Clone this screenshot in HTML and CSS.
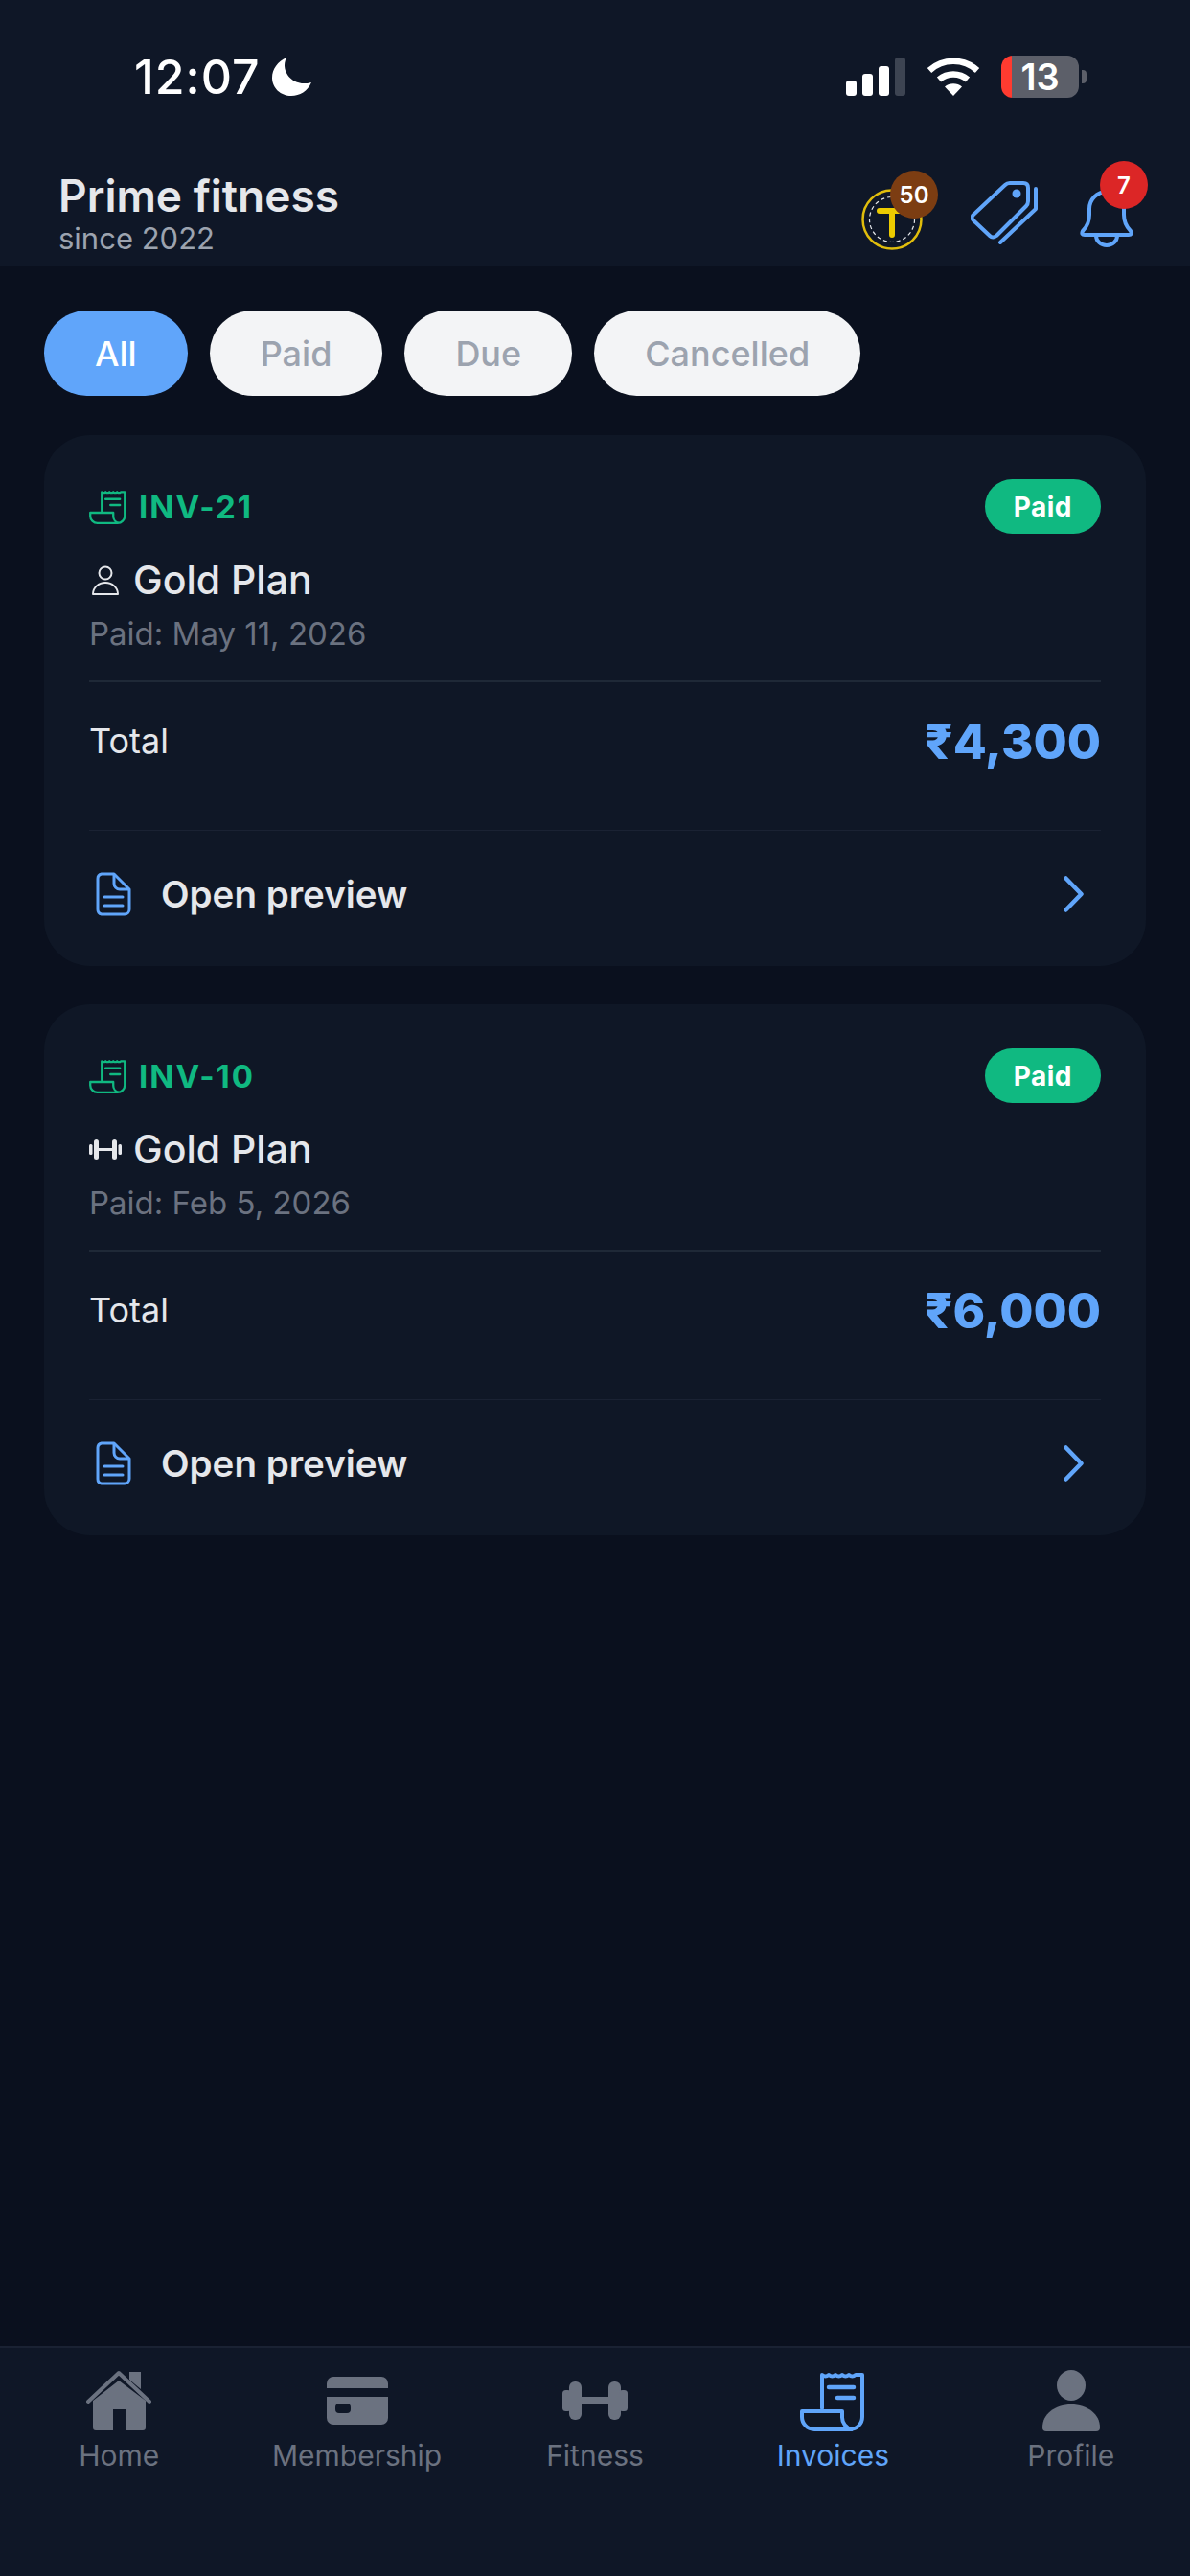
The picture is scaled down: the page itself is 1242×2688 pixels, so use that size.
FILE: index.html
```html
<!DOCTYPE html>
<html lang="en">
<head>
  <meta charset="UTF-8">
  <meta name="viewport" content="width=device-width, initial-scale=1.0">
  <title>Invoices</title>
  <link rel="stylesheet" href="styles.css">
</head>
<body>
  <svg class="sprite" xmlns="http://www.w3.org/2000/svg">
    <symbol id="receipt" viewBox="0 0 68 63">
      <path d="M23 39V4q3.5 3 7 0q3.5 3 7 0q3.5 3 7 0q3.5 3 7 0q3.5 3 7 0l7 0V48a13 13 0 0 1-13 13H15A13 13 0 0 1 2 48V42H44V48a13 13 0 0 0 10 13" fill="none" stroke="currentColor" stroke-width="4" stroke-linejoin="round" stroke-linecap="round"/>
      <path d="M30 17H56M39 28H56" fill="none" stroke="currentColor" stroke-width="4.5" stroke-linecap="round"/>
    </symbol>
    <symbol id="doc" viewBox="0 0 37 46">
      <path d="M6 2H19L35 18V39a5 5 0 0 1-5 5H6a5 5 0 0 1-4-5V7a5 5 0 0 1 4-5Z" fill="none" stroke="currentColor" stroke-width="3" stroke-linejoin="round"/>
      <path d="M19 3V12a6 6 0 0 0 6 6H34M9 26H28M9 35H28" fill="none" stroke="currentColor" stroke-width="3" stroke-linecap="round"/>
    </symbol>
    <symbol id="chevron" viewBox="0 0 21 38">
      <path d="M2.5 2.5 18.5 19 2.5 35.5" fill="none" stroke="currentColor" stroke-width="4.5" stroke-linecap="round" stroke-linejoin="round"/>
    </symbol>
    <symbol id="dumbbell" viewBox="0 0 68 40">
      <rect x="0" y="9" width="9" height="22" rx="3.5" fill="currentColor"/>
      <rect x="7" y="0" width="13" height="40" rx="6" fill="currentColor"/>
      <rect x="18" y="16" width="32" height="8" fill="currentColor"/>
      <rect x="48" y="0" width="13" height="40" rx="6" fill="currentColor"/>
      <rect x="59" y="9" width="9" height="22" rx="3.5" fill="currentColor"/>
    </symbol>
  </svg>

  <div class="app">
    <header class="topbar">
      <div class="status">
        <div class="status-left">
          <span class="clock">12:07</span>
          <svg class="moon" viewBox="0 0 41 40"><path d="M15 0C6 4 0 12 0 21C0 32 9 40 20 40C29 40 37 35 41 26C38 27 36 27 33 27C22 27 13 18 13 8C13 5 14 2 15 0Z" fill="#fff"/></svg>
        </div>
        <div class="status-right">
          <svg class="signal" viewBox="0 0 62 40">
            <rect x="0" y="24" width="11" height="16" rx="3" fill="#fff"/>
            <rect x="17" y="17" width="11" height="23" rx="3" fill="#fff"/>
            <rect x="34" y="9" width="11" height="31" rx="3" fill="#fff"/>
            <rect x="51" y="0" width="11" height="40" rx="3" fill="#3d4452"/>
          </svg>
          <svg class="wifi" viewBox="0 0 56 40">
            <path d="M3 13.5A37 37 0 0 1 53 13.5" fill="none" stroke="#fff" stroke-width="6.5"/>
            <path d="M13 23A23 23 0 0 1 43 23" fill="none" stroke="#fff" stroke-width="6.5"/>
            <path d="M19 30.5A14 14 0 0 1 37 30.5L28 40Z" fill="#fff"/>
          </svg>
          <div class="battery">13</div>
          <span class="battery-cap"></span>
        </div>
      </div>
      <div class="brandbar">
        <div class="brand">
          <div class="brand-name">Prime fitness</div>
          <div class="brand-since">since 2022</div>
        </div>
        <div class="actions">
          <div class="action action-coin">
            <svg class="coin" viewBox="0 0 64 64">
              <circle cx="32" cy="32" r="30.5" fill="none" stroke="#e0bd0c" stroke-width="2.5"/>
              <circle cx="32" cy="32" r="23.5" fill="none" stroke="#e5e7eb" stroke-width="1.2" stroke-dasharray="4 3"/>
              <path d="M19 23H45M32 23V48" fill="none" stroke="#eccb00" stroke-width="6" stroke-linecap="round"/>
            </svg>
            <span class="count count-brown">50</span>
          </div>
          <div class="action action-tag">
            <svg class="tag" viewBox="0 0 70 66">
              <path d="M3 35 36 4Q38 2 41 2H55Q60 2 60 7V21Q60 24 58 26L27 57Q23 60 20 57L3 41Q0 38 3 35Z" fill="none" stroke="#60a5fa" stroke-width="4" stroke-linejoin="round"/>
              <circle cx="48" cy="13" r="4.5" fill="#60a5fa"/>
              <path d="M68 8V29L31 64" fill="none" stroke="#60a5fa" stroke-width="4" stroke-linecap="round" stroke-linejoin="round"/>
            </svg>
          </div>
          <div class="action action-bell">
            <svg class="bell" viewBox="0 0 56 62">
              <path d="M5 49Q1 49 3 45Q10 38 10 28V22A18 18 0 0 1 46 22V28Q46 38 53 45Q55 49 51 49Z" fill="none" stroke="#60a5fa" stroke-width="4" stroke-linejoin="round"/>
              <path d="M17 50A11 10 0 0 0 39 50" fill="none" stroke="#60a5fa" stroke-width="4"/>
            </svg>
            <span class="count count-red">7</span>
          </div>
        </div>
      </div>
    </header>

    <main class="content">
      <div class="filters">
        <button class="pill pill-active">All</button>
        <button class="pill">Paid</button>
        <button class="pill">Due</button>
        <button class="pill">Cancelled</button>
      </div>

      <section class="card">
        <div class="card-head">
          <div class="inv">
            <svg class="inv-icon"><use href="#receipt"/></svg>
            <span>INV-21</span>
          </div>
          <span class="badge">Paid</span>
        </div>
        <div class="plan">
          <svg class="plan-icon person" viewBox="0 0 30 31">
            <ellipse cx="15" cy="8" rx="6.5" ry="6.5" fill="none" stroke="#e5e7eb" stroke-width="2"/>
            <path d="M2 30C2 23 8 18 15 18S28 23 28 30Z" fill="none" stroke="#e5e7eb" stroke-width="2" stroke-linejoin="round"/>
          </svg>
          <span>Gold Plan</span>
        </div>
        <div class="paid-date">Paid: May 11, 2026</div>
        <div class="total">
          <span class="total-label">Total</span>
          <span class="total-amount">₹4,300</span>
        </div>
        <div class="preview">
          <svg class="doc-icon"><use href="#doc"/></svg>
          <span class="preview-text">Open preview</span>
          <svg class="chevron-icon"><use href="#chevron"/></svg>
        </div>
      </section>

      <section class="card">
        <div class="card-head">
          <div class="inv">
            <svg class="inv-icon"><use href="#receipt"/></svg>
            <span>INV-10</span>
          </div>
          <span class="badge">Paid</span>
        </div>
        <div class="plan">
          <svg class="plan-icon barbell" viewBox="0 0 34 21">
            <rect x="0" y="5" width="3.5" height="11" rx="1.5" fill="#e5e7eb"/>
            <rect x="5" y="0" width="5" height="21" rx="2.5" fill="#e5e7eb"/>
            <rect x="9" y="9" width="16" height="3" fill="#e5e7eb"/>
            <rect x="24" y="0" width="5" height="21" rx="2.5" fill="#e5e7eb"/>
            <rect x="30.5" y="5" width="3.5" height="11" rx="1.5" fill="#e5e7eb"/>
          </svg>
          <span>Gold Plan</span>
        </div>
        <div class="paid-date">Paid: Feb 5, 2026</div>
        <div class="total">
          <span class="total-label">Total</span>
          <span class="total-amount">₹6,000</span>
        </div>
        <div class="preview">
          <svg class="doc-icon"><use href="#doc"/></svg>
          <span class="preview-text">Open preview</span>
          <svg class="chevron-icon"><use href="#chevron"/></svg>
        </div>
      </section>
    </main>

    <nav class="tabbar">
      <a class="tab">
        <span class="tab-icon">
          <svg class="home-icon" viewBox="0 0 68 64">
            <path d="M45 2H57V20L45 10Z" fill="currentColor"/>
            <path d="M2 33 34 3 66 33" fill="none" stroke="currentColor" stroke-width="4" stroke-linecap="round" stroke-linejoin="round"/>
            <path d="M7 32 34 11 62 32V60a3 3 0 0 1-3 3H42V41H28V63H10a3 3 0 0 1-3-3Z" fill="currentColor"/>
          </svg>
        </span>
        <span>Home</span>
      </a>
      <a class="tab">
        <span class="tab-icon">
          <svg class="card-icon" viewBox="0 0 64 50">
            <path d="M0 12V7a7 7 0 0 1 7-7H57a7 7 0 0 1 7 7V12Z" fill="currentColor"/>
            <path fill-rule="evenodd" d="M0 21H64V43a7 7 0 0 1-7 7H7a7 7 0 0 1-7-7ZM13 28a4 4 0 0 0-4 4V34a4 4 0 0 0 4 4H21a4 4 0 0 0 4-4V32a4 4 0 0 0-4-4Z" fill="currentColor"/>
          </svg>
        </span>
        <span>Membership</span>
      </a>
      <a class="tab">
        <span class="tab-icon">
          <svg class="dumbbell-icon"><use href="#dumbbell"/></svg>
        </span>
        <span>Fitness</span>
      </a>
      <a class="tab tab-active">
        <span class="tab-icon">
          <svg class="receipt-icon"><use href="#receipt"/></svg>
        </span>
        <span>Invoices</span>
      </a>
      <a class="tab">
        <span class="tab-icon">
          <svg class="profile-icon" viewBox="0 0 60 64">
            <ellipse cx="30" cy="16" rx="15" ry="16" fill="currentColor"/>
            <path d="M0 60C0 46 13 36 30 36S60 46 60 60Q60 64 56 64H4Q0 64 0 60Z" fill="currentColor"/>
          </svg>
        </span>
        <span>Profile</span>
      </a>
    </nav>
  </div>
</body>
</html>
```

FILE: styles.css
```css
* {
  box-sizing: border-box;
}
html, body {
  margin: 0;
  height: 100%;
}
body {
  font-family: Inter, "Noto Sans", sans-serif;
  font-optical-sizing: none;
  background-color: #0a101e;
  color: #e5e7eb;
}
.sprite {
  display: none;
}
.app {
  display: flex;
  flex-direction: column;
  height: 2688px;
}

/* top area */
.topbar {
  height: 278px;
  background: #0f1727;
}
.status {
  display: flex;
  justify-content: space-between;
  align-items: center;
  height: 160px;
  padding: 0 108px 0 140px;
}
.status-left {
  display: flex;
  align-items: center;
  gap: 12px;
}
.clock {
  font-size: 50px;
  font-weight: 500;
  letter-spacing: 1px;
  color: #fff;
}
.moon {
  width: 41px;
  height: 40px;
}
.status-right {
  display: flex;
  align-items: center;
}
.signal {
  width: 62px;
  height: 40px;
}
.wifi {
  width: 56px;
  height: 40px;
  margin-left: 22px;
}
.battery {
  width: 81px;
  height: 44px;
  margin-left: 22px;
  border-radius: 12px;
  background: linear-gradient(to right, #ff3b30 11px, #5c5f69 11px);
  color: #fff;
  font-size: 38px;
  font-weight: 600;
  line-height: 44px;
  text-align: center;
}
.battery-cap {
  width: 5px;
  height: 14px;
  margin-left: 3px;
  border-radius: 0 4px 4px 0;
  background: #5c5f69;
}
.brandbar {
  display: flex;
  justify-content: space-between;
  align-items: flex-start;
  padding: 18px 59px 0 61px;
}
.brand-name {
  padding-top: 1px;
  font-size: 46px;
  font-weight: 600;
  line-height: 50px;
}
.brand-since {
  font-size: 31px;
  line-height: 40px;
  color: #9ca3af;
}
.actions {
  display: flex;
  align-items: flex-start;
  padding-top: 11px;
}
.action {
  position: relative;
}
.action svg {
  display: block;
}
.coin {
  width: 64px;
  height: 64px;
  margin-top: 8px;
}
.tag {
  width: 70px;
  height: 66px;
}
.bell {
  width: 56px;
  height: 62px;
}
.action-tag {
  margin-left: 50px;
}
.action-bell {
  margin-left: 44px;
  padding-top: 7px;
}
.count {
  position: absolute;
  display: flex;
  align-items: center;
  justify-content: center;
  width: 50px;
  height: 50px;
  border-radius: 50%;
  color: #fff;
  font-size: 24px;
  font-weight: 600;
}
.count-brown {
  top: -11px;
  left: 30px;
  background: #7c3d12;
}
.count-red {
  top: -21px;
  left: 21px;
  background: #dc2626;
}

/* list */
.content {
  flex: 1;
  padding: 46px 46px 0;
}
.filters {
  display: flex;
  gap: 23px;
  margin-bottom: 41px;
}
.pill {
  height: 89px;
  padding: 0 53px;
  border: none;
  border-radius: 45px;
  background: #f3f4f6;
  color: #9ca3af;
  font-family: inherit;
  font-optical-sizing: none;
  font-size: 36px;
  font-weight: 500;
}
.pill-active {
  background: #60a5fa;
  color: #fff;
}
.card {
  height: 554px;
  margin-bottom: 40px;
  padding: 46px 47px 0;
  border-radius: 48px;
  background: #0f1726;
}
.card-head {
  display: flex;
  justify-content: space-between;
  align-items: center;
}
.inv {
  display: flex;
  align-items: center;
  gap: 13px;
  color: #10b981;
  font-size: 33px;
  font-weight: 700;
  letter-spacing: 2px;
}
.inv-icon {
  width: 39px;
  height: 36px;
}
.badge {
  display: flex;
  align-items: center;
  height: 57px;
  padding: 0 30px;
  border-radius: 29px;
  background: #10b981;
  color: #fff;
  font-size: 28px;
  font-weight: 700;
  letter-spacing: 0.5px;
}
.plan {
  display: flex;
  align-items: center;
  height: 46px;
  margin-top: 25px;
  font-size: 41px;
  font-weight: 500;
}
.plan-icon {
  margin-right: 12px;
}
.person {
  width: 30px;
  height: 31px;
  margin-left: 2px;
  margin-right: 14px;
}
.barbell {
  width: 34px;
  height: 21px;
}
.paid-date {
  height: 38px;
  margin-top: 14px;
  color: #6b7280;
  font-size: 33px;
  line-height: 38px;
}
.total {
  display: flex;
  justify-content: space-between;
  align-items: center;
  height: 124px;
  margin-top: 30px;
  border-top: 2px solid #1f2937;
}
.total-label {
  font-size: 36px;
}
.total-amount {
  color: #60a5fa;
  font-size: 51px;
  font-weight: 800;
}
.preview {
  display: flex;
  align-items: center;
  height: 132px;
  margin-top: 32px;
  border-top: 1px solid #1a2233;
}
.doc-icon {
  width: 37px;
  height: 46px;
  margin-left: 7px;
  color: #60a5fa;
}
.preview-text {
  flex: 1;
  margin-left: 31px;
  font-size: 38.5px;
  font-weight: 600;
}
.chevron-icon {
  width: 21px;
  height: 38px;
  margin-right: 18px;
  color: #60a5fa;
}

/* bottom nav */
.tabbar {
  display: grid;
  grid-template-columns: repeat(5, 1fr);
  height: 240px;
  padding-top: 23px;
  border-top: 2px solid #1a2233;
  background: #0f1727;
}
.tab {
  display: flex;
  flex-direction: column;
  align-items: center;
  color: #6b7280;
  font-size: 30px;
  line-height: 36px;
}
.tab-active {
  color: #60a5fa;
}
.tab-icon {
  display: flex;
  align-items: center;
  justify-content: center;
  height: 64px;
  margin-bottom: 7px;
}
.home-icon {
  width: 68px;
  height: 64px;
}
.card-icon {
  width: 64px;
  height: 50px;
}
.dumbbell-icon {
  width: 68px;
  height: 40px;
}
.receipt-icon {
  width: 68px;
  height: 63px;
}
.profile-icon {
  width: 60px;
  height: 64px;
}
```
